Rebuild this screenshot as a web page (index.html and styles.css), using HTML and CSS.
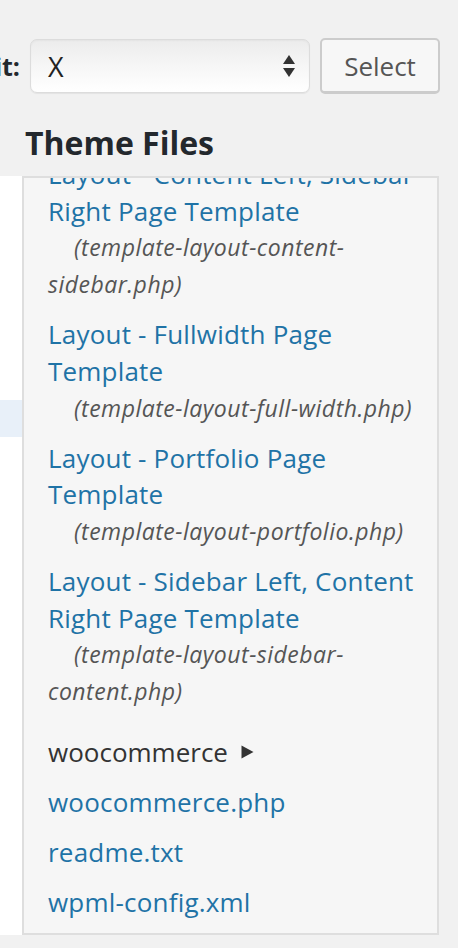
FILE: index.html
```html
<!DOCTYPE html>
<html lang="en">
<head>
<meta charset="utf-8">
<title>Edit Themes</title>
<link rel="stylesheet" href="styles.css">
</head>
<body>
<div class="theme-select">
  <label class="theme-label">Select theme to edit:</label>
  <div class="fake-select">
    <span class="fake-select-value">X</span>
    <svg class="fake-select-arrows" width="14" height="24" viewBox="0 0 14 24" aria-hidden="true">
      <path d="M7 1 L13 10 L1 10 Z" fill="#333"/>
      <path d="M1 14 L13 14 L7 23 Z" fill="#333"/>
    </svg>
  </div>
  <button class="select-button" type="button">Select</button>
</div>

<h2 class="files-title">Theme Files</h2>

<div class="editor-row">
  <div class="code-strip">
    <div class="active-line"></div>
  </div>
  <div class="files-panel">
    <ul class="file-list">
      <li class="file-item">
        <a class="file-link" href="#">Layout - Content Left, Sidebar Right Page Template</a>
        <span class="file-desc">(template-layout-content-sidebar.php)</span>
      </li>
      <li class="file-item">
        <a class="file-link" href="#">Layout - Fullwidth Page Template</a>
        <span class="file-desc">(template-layout-full-width.php)</span>
      </li>
      <li class="file-item">
        <a class="file-link" href="#">Layout - Portfolio Page Template</a>
        <span class="file-desc">(template-layout-portfolio.php)</span>
      </li>
      <li class="file-item">
        <a class="file-link" href="#">Layout - Sidebar Left, Content Right Page Template</a>
        <span class="file-desc">(template-layout-sidebar-content.php)</span>
      </li>
      <li class="file-item folder-item">
        <span class="folder-name">woocommerce</span>
        <svg class="folder-arrow" width="13" height="14" viewBox="0 0 13 14" aria-hidden="true">
          <path d="M0.5 0.5 L12.5 7 L0.5 13.5 Z" fill="#333"/>
        </svg>
      </li>
      <li class="file-item"><a class="file-link" href="#">woocommerce.php</a></li>
      <li class="file-item"><a class="file-link" href="#">readme.txt</a></li>
      <li class="file-item"><a class="file-link" href="#">wpml-config.xml</a></li>
    </ul>
  </div>
</div>
</body>
</html>
```

FILE: styles.css
```css
html, body {
  margin: 0;
  padding: 0;
}
body {
  background: #f1f1f1;
  font-family: "Open Sans", "Liberation Sans", sans-serif;
  color: #333;
  width: 458px;
  height: 948px;
  overflow: hidden;
}

.theme-select {
  display: flex;
  align-items: center;
  justify-content: flex-end;
  gap: 10px;
  width: 440px;
  margin-top: 38px;
  height: 56px;
}
.theme-label {
  flex-shrink: 0;
  white-space: nowrap;
  font-size: 25px;
  font-weight: 700;
  color: #23282d;
}
.fake-select {
  flex-shrink: 0;
  box-sizing: border-box;
  width: 280px;
  height: 54px;
  display: flex;
  align-items: center;
  justify-content: space-between;
  padding: 0 13px 0 17px;
  border: 1.5px solid #dcdcdc;
  border-radius: 7px;
  background: linear-gradient(#ececec, #f6f6f6 50%, #ffffff);
  box-shadow: inset 0 1px 2px rgba(0,0,0,0.04), 0 1px 1px rgba(0,0,0,0.06);
}
.fake-select-value {
  font-size: 27px;
  color: #222;
}
.fake-select-arrows {
  display: block;
}
.select-button {
  flex-shrink: 0;
  box-sizing: border-box;
  width: 120px;
  height: 56px;
  border: 2px solid #cccccc;
  border-bottom-width: 3px;
  border-radius: 5px;
  background: #f7f7f7;
  font-family: inherit;
  font-size: 26px;
  color: #555;
  padding: 0;
}

.files-title {
  margin: 31px 0 15px 25px;
  font-size: 32px;
  line-height: 36px;
  font-weight: 700;
  color: #23282d;
}

.editor-row {
  display: flex;
  height: 759px;
}
.code-strip {
  width: 22px;
  background: #ffffff;
  padding-top: 224px;
  box-sizing: border-box;
}
.active-line {
  height: 37px;
  background: #e8f0f9;
}
.files-panel {
  box-sizing: border-box;
  width: 417px;
  height: 759px;
  border: 2px solid #dedede;
  background: #f6f6f6;
  overflow: hidden;
  padding-left: 24px;
}
.file-list {
  list-style: none;
  margin: -22px 0 0;
  padding: 0;
  display: flex;
  flex-direction: column;
  gap: 13.3px;
}
.file-item {
  font-size: 26px;
  letter-spacing: 0.2px;
  line-height: 36.7px;
  padding-right: 18px;
}
.file-link {
  color: #1f73a6;
  text-decoration: none;
}
.file-desc {
  display: block;
  text-indent: 26px;
  font-size: 23px;
  letter-spacing: 0.5px;
  font-style: italic;
  color: #555;
}
.folder-item {
  margin-top: 11px;
  display: flex;
  align-items: center;
  gap: 13px;
}
.folder-name {
  color: #333;
  letter-spacing: 0;
}
.folder-arrow {
  display: block;
}
```
